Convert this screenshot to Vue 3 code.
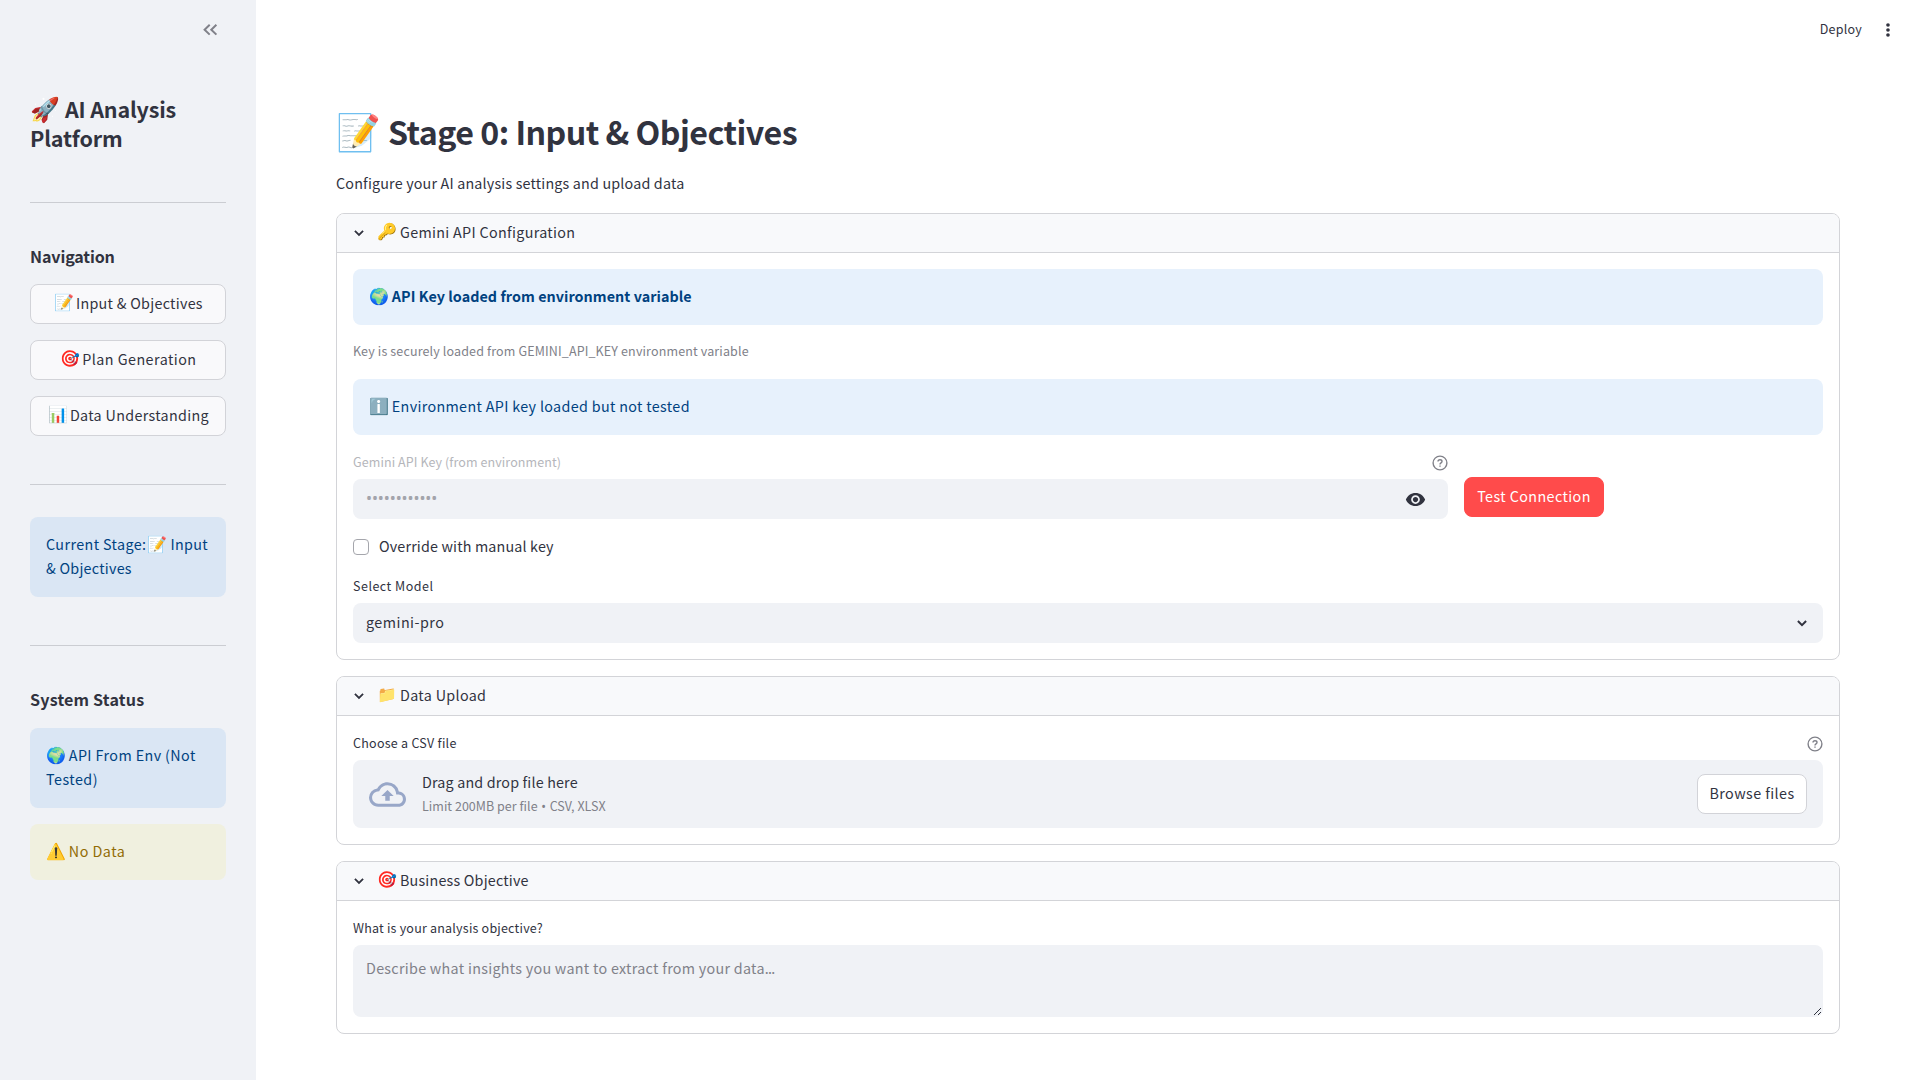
<script setup>
const navItems = [
  { icon: '📝', label: 'Input & Objectives', cls: 'n1' },
  { icon: '🎯', label: 'Plan Generation', cls: 'n2' },
  { icon: '📊', label: 'Data Understanding', cls: 'n3' },
]
</script>

<template>
  <div class="app">
    <aside class="sidebar">
      <div class="side-head">
        <svg class="collapse" viewBox="0 0 24 24"><path d="M11.7 6.8 6.6 11.7l5.1 4.9M18.4 6.8 13.3 11.7l5.1 4.9" /></svg>
      </div>
      <h1 class="brand"><span class="em em-brand">🚀</span><span class="t brand-a">AI Analysis</span><br /><span class="t brand-b">Platform</span></h1>
      <hr class="hr1" />
      <h3 class="side-title"><span class="t nav-title">Navigation</span></h3>
      <nav class="nav">
        <button v-for="item in navItems" :key="item.label" class="btn nav-btn"><span class="em">{{ item.icon }}</span><span class="t" :class="item.cls">{{ item.label }}</span></button>
      </nav>
      <hr class="hr2" />
      <div class="note info"><span class="t cs1">Current Stage:</span><span class="em em-mid">📝</span><span class="t cs2">Input</span><br /><span class="t cs3">&amp; Objectives</span></div>
      <hr class="hr3" />
      <h3 class="side-title"><span class="t sys-title">System Status</span></h3>
      <div class="note info"><span class="em">🌍</span><span class="t st1">API From Env (Not</span><br /><span class="t st2">Tested)</span></div>
      <div class="note warn"><span class="em">⚠️</span><span class="t st3">No Data</span></div>
    </aside>

    <main class="main">
      <header class="toolbar">
        <span class="t deploy">Deploy</span>
        <svg class="dots" viewBox="0 0 24 24"><circle cx="12" cy="6" r="2.2" /><circle cx="12" cy="12" r="2.2" /><circle cx="12" cy="18" r="2.2" /></svg>
      </header>
      <div class="content">
        <h1 class="title"><span class="em em-title">📝</span><span class="t title-t">Stage 0: Input &amp; Objectives</span></h1>
        <p class="lead"><span class="t lead-t">Configure your AI analysis settings and upload data</span></p>

        <section class="card">
          <div class="card-head">
            <svg class="chev" viewBox="0 0 16 16"><path d="M3.9 5.8 8 9.9 12.1 5.8" /></svg>
            <span class="em">🔑</span><span class="t h1t">Gemini API Configuration</span>
          </div>
          <div class="card-body">
            <div class="alert bold"><span class="em">🌍</span><span class="t a1">API Key loaded from environment variable</span></div>
            <p class="caption"><span class="t cap">Key is securely loaded from GEMINI_API_KEY environment variable</span></p>
            <div class="alert"><span class="em">ℹ️</span><span class="t a2">Environment API key loaded but not tested</span></div>
            <div class="key-row">
              <div class="key-col">
                <div class="label muted"><span class="t l1">Gemini API Key (from environment)</span>
                  <svg class="help" viewBox="0 0 16 16"><circle cx="8" cy="8" r="6.9" /><path d="M6 6.5C6 5.3 6.9 4.7 8 4.7s2 .7 2 1.7c0 1.4-2 1.5-2 3" /><path d="M8 10.5v1.3" /></svg>
                </div>
                <div class="field"><span class="t pw">••••••••••••</span>
                  <svg class="eye" viewBox="0 0 24 24"><path d="M12 4.5C7 4.5 2.73 7.61 1 12c1.73 4.39 6 7.5 11 7.5s9.27-3.11 11-7.5c-1.73-4.39-6-7.5-11-7.5zM12 17c-2.76 0-5-2.24-5-5s2.24-5 5-5 5 2.24 5 5-2.24 5-5 5zm0-8c-1.66 0-3 1.34-3 3s1.34 3 3 3 3-1.34 3-3-1.34-3-3-3z" /></svg>
                </div>
              </div>
              <button class="btn primary"><span class="t test">Test Connection</span></button>
            </div>
            <label class="check"><i class="box"></i><span class="t ov">Override with manual key</span></label>
            <div class="label"><span class="t l2">Select Model</span></div>
            <div class="field select"><span class="t gp">gemini-pro</span>
              <svg class="chev" viewBox="0 0 16 16"><path d="M3.9 6 8 10.1 12.1 6" /></svg>
            </div>
          </div>
        </section>

        <section class="card">
          <div class="card-head">
            <svg class="chev" viewBox="0 0 16 16"><path d="M3.9 5.8 8 9.9 12.1 5.8" /></svg>
            <span class="em">📁</span><span class="t h2t">Data Upload</span>
          </div>
          <div class="card-body">
            <div class="label"><span class="t l3">Choose a CSV file</span>
              <svg class="help" viewBox="0 0 16 16"><circle cx="8" cy="8" r="6.9" /><path d="M6 6.5C6 5.3 6.9 4.7 8 4.7s2 .7 2 1.7c0 1.4-2 1.5-2 3" /><path d="M8 10.5v1.3" /></svg>
            </div>
            <div class="drop">
              <svg class="cloud" viewBox="0 0 24 24"><path d="M19.35 10.04A7.49 7.49 0 0012 4C9.11 4 6.6 5.64 5.35 8.04A5.994 5.994 0 000 14c0 3.31 2.69 6 6 6h13c2.76 0 5-2.24 5-5 0-2.64-2.05-4.78-4.65-4.96zM19 18H6c-2.21 0-4-1.79-4-4 0-2.05 1.53-3.76 3.56-3.97l1.07-.11.5-.95A5.469 5.469 0 0112 6c2.62 0 4.88 1.86 5.39 4.43l.3 1.5 1.53.11A2.98 2.98 0 0122 15c0 1.65-1.35 3-3 3zM8 13h2.55v3h2.9v-3H16l-4-4-4 4z" /></svg>
              <div class="drop-text"><span class="t d1">Drag and drop file here</span><span class="t d2">Limit 200MB per file <span class="bullet">•</span> CSV, XLSX</span></div>
              <button class="btn browse"><span class="t br">Browse files</span></button>
            </div>
          </div>
        </section>

        <section class="card">
          <div class="card-head">
            <svg class="chev" viewBox="0 0 16 16"><path d="M3.9 5.8 8 9.9 12.1 5.8" /></svg>
            <span class="em">🎯</span><span class="t h3t">Business Objective</span>
          </div>
          <div class="card-body">
            <div class="label"><span class="t l4">What is your analysis objective?</span></div>
            <div class="area"><span class="t ph">Describe what insights you want to extract from your data<span class="ell">...</span></span>
              <svg class="grip" viewBox="0 0 9 9"><path d="M1 8 8 1M5 8 8 5" /></svg>
            </div>
          </div>
        </section>
      </div>
    </main>
  </div>
</template>

<style>
body { background: #fff; overflow: hidden; }
</style>

<style scoped>
* { box-sizing: border-box; }
.app { display: flex; width: 1920px; height: 1080px; overflow: hidden; color: #31333f; font-family: "Noto Sans CJK SC", "Noto Color Emoji", sans-serif; font-size: 14.32px; line-height: 24px; }
h1, h3, p { margin: 0; }
.t { white-space: nowrap; }
.em { display: inline-block; width: 22.8px; font-size: 16px; white-space: nowrap; font-family: "Noto Color Emoji", sans-serif; line-height: 1; }

.sidebar { width: 256px; flex: none; background: #f0f2f6; padding: 0 30px; display: flex; flex-direction: column; }
.side-head { height: 94px; display: flex; justify-content: flex-end; padding-top: 18px; }
.collapse { width: 24px; height: 24px; margin-right: 4px; fill: none; stroke: #808189; stroke-width: 2; }
.brand { font-size: 21.5px; line-height: 29px; font-weight: 600; }
.em-brand { font-size: 24px; width: 35px; }
.brand-a { letter-spacing: -0.18px; }
.brand-b { letter-spacing: -0.16px; }
hr { width: 100%; border: 0; border-top: 1px solid #cbcdd2; margin: 0; }
.hr1 { margin: 50px 0 41px; }
.side-title { font-size: 16.1px; line-height: 24px; font-weight: 600; }
.nav-title { letter-spacing: -0.15px; }
.sys-title { letter-spacing: 0.18px; }
.nav { display: flex; flex-direction: column; gap: 16px; margin-top: 16px; }
.btn { height: 40px; border: 1px solid #d2d3d8; border-radius: 8px; font: inherit; color: inherit; padding: 0 0 2px; display: flex; align-items: center; justify-content: center; }
.nav-btn { background: #f9f9fb; }
.n1 { letter-spacing: 0.28px; }
.n2 { letter-spacing: 0.47px; }
.n3 { letter-spacing: 0.32px; }
.hr2 { margin: 48px 0 32px; }
.note { border-radius: 8px; padding: 15px 16px 17px; white-space: nowrap; }
.info { background: #dae6f4; color: #004280; }
.warn { background: #f0f0df; color: #926c05; margin-top: 16px; }
.em-mid { margin-left: 1.2px; }
.cs1 { letter-spacing: 0.4px; }
.cs2 { letter-spacing: 0.3px; }
.cs3 { letter-spacing: 0.25px; }
.st1 { letter-spacing: 0.4px; }
.st2 { letter-spacing: 0.47px; }
.st3 { letter-spacing: 0.5px; }
.hr3 { margin: 48px 0 41px; }
.hr3 + .side-title { margin-bottom: 17px; }

.main { flex: 1; display: flex; flex-direction: column; }
.toolbar { height: 60px; display: flex; justify-content: flex-end; align-items: center; padding-right: 22px; gap: 16px; font-size: 12.5px; }
.deploy { letter-spacing: 0.25px; padding-bottom: 2px; }
.dots { width: 20px; height: 20px; fill: #31333f; }
.content { padding: 36px 80px 0; }
.title { height: 76px; font-size: 32.2px; line-height: 70px; font-weight: 600; }
.em-title { font-size: 36px; width: 52px; }
.title-t { letter-spacing: -0.54px; }
.lead { height: 25px; line-height: 22px; }
.lead-t { letter-spacing: 0.175px; }
.card { border: 1px solid #d3d4d8; border-radius: 8px; margin-top: 16px; overflow: hidden; }
.card-head { height: 39px; background: #f8f9fb; border-bottom: 1px solid #d3d4d8; display: flex; align-items: center; padding-left: 14px; }
.card-head .t, .card-head .em { padding-bottom: 2px; }
.chev { width: 16px; height: 16px; margin-right: 10.2px; fill: none; stroke: #31333f; stroke-width: 1.8; }
.h1t { letter-spacing: 0.32px; }
.h2t { letter-spacing: 0.33px; }
.h3t { letter-spacing: 0.2px; }
.card-body { padding: 16px; }
.alert { height: 56px; border-radius: 8px; background: #e7f1fc; color: #004280; padding: 15px 16px; }
.bold { font-weight: 600; }
.a1 { letter-spacing: 0.06px; }
.a2 { letter-spacing: 0.34px; }
.caption { height: 54px; padding-top: 15px; line-height: 21px; font-size: 12.5px; color: #808189; }
.cap { letter-spacing: 0.14px; }
.key-row { display: flex; gap: 16px; margin-top: 16px; align-items: flex-end; }
.key-col { width: 1095px; }
.label { height: 28px; font-size: 12.5px; line-height: 22px; display: flex; justify-content: space-between; }
.muted .t { color: #b5b6bb; }
.l1 { letter-spacing: 0.09px; }
.l2 { letter-spacing: 0.5px; }
.l3 { letter-spacing: 0.26px; }
.l4 { letter-spacing: 0.21px; }
.help { width: 16px; height: 16px; margin-top: 4px; fill: none; stroke: #808189; stroke-width: 1.4; }
.field { height: 40px; border-radius: 8px; background: #f0f2f6; padding: 0 13px; display: flex; align-items: center; justify-content: space-between; }
.field .t, .check .t { padding-bottom: 2px; }
.pw { color: #a3a4ab; font-family: "Noto Sans", sans-serif; font-size: 16px; letter-spacing: -0.08px; }
.gp { letter-spacing: 0.48px; }
.eye { width: 21px; height: 21px; margin-right: 9.5px; fill: #31333f; }
.primary { width: 140px; background: #ff4b4b; border-color: #ff4b4b; color: #fff; margin-bottom: 2px; }
.test { letter-spacing: 0.41px; }
.check { display: flex; align-items: center; height: 24px; margin: 16px 0; gap: 10px; }
.ov { letter-spacing: 0.16px; }
.box { width: 16px; height: 16px; border: 1px solid #a5a6ac; border-radius: 4px; background: #fff; }
.select .chev { margin-right: 0; stroke-width: 2; }
.drop { height: 68px; border-radius: 8px; background: #f0f2f6; padding: 0 16px; display: flex; align-items: center; }
.cloud { width: 37px; height: 37px; fill: #98a7c8; margin-right: 16px; }
.drop-text { display: flex; flex-direction: column; flex: 1; }
.d1 { letter-spacing: 0.165px; }
.d2 { font-size: 12.5px; color: #808189; letter-spacing: 0.03px; }
.bullet { font-family: "Noto Sans", sans-serif; margin: 0 0.8px; line-height: 1; }
.browse { width: 110px; background: #fff; }
.br { letter-spacing: 0.42px; }
.area { position: relative; height: 72px; border-radius: 8px; background: #f0f2f6; padding: 11px 13px; color: #808189; }
.ph { letter-spacing: 0.29px; }
.ell { letter-spacing: -0.8px; }
.grip { position: absolute; right: 1px; bottom: 1px; width: 9px; height: 9px; fill: none; stroke: #31333f; stroke-width: 1; }
</style>
